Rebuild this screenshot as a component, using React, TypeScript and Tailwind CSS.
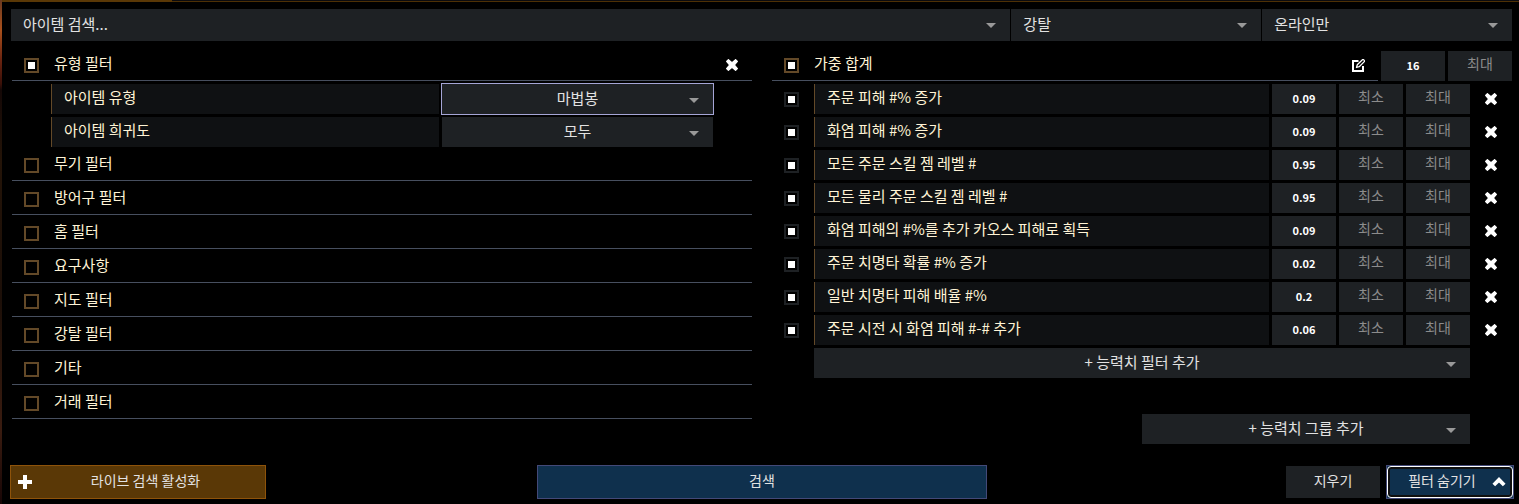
import React, { useState } from 'react';

interface StatFilter {
  id: number;
  label: string;
  weight: string;
}

const statFilters: StatFilter[] = [
  { id: 1, label: '주문 피해 #% 증가', weight: '0.09' },
  { id: 2, label: '화염 피해 #% 증가', weight: '0.09' },
  { id: 3, label: '모든 주문 스킬 젬 레벨 #', weight: '0.95' },
  { id: 4, label: '모든 물리 주문 스킬 젬 레벨 #', weight: '0.95' },
  { id: 5, label: '화염 피해의 #%를 추가 카오스 피해로 획득', weight: '0.09' },
  { id: 6, label: '주문 치명타 확률 #% 증가', weight: '0.02' },
  { id: 7, label: '일반 치명타 피해 배율 #%', weight: '0.2' },
  { id: 8, label: '주문 시전 시 화염 피해 #-# 추가', weight: '0.06' }
];

const closedGroups = [
  '무기 필터',
  '방어구 필터',
  '홈 필터',
  '요구사항',
  '지도 필터',
  '강탈 필터',
  '기타',
  '거래 필터'
];

const Caret = () => (
  <svg
    viewBox="0 0 10 5"
    className="pointer-events-none absolute right-3.5 top-3.5 h-[5px] w-[10px] text-[#999999]"
    aria-hidden="true"
  >
    <path d="M0 0h10L5 5z" fill="currentColor" />
  </svg>
);

const CloseIcon = () => (
  <svg viewBox="0 0 12 12" className="h-3 w-3" aria-hidden="true">
    <path
      d="M2.4.6L6 3.7 9.6.6l1.8 1.8L8.3 6l3.1 3.6-1.8 1.8L6 8.3l-3.6 3.1L.6 9.6 3.7 6 .6 2.4z"
      fill="currentColor"
      stroke="currentColor"
      strokeWidth="1.2"
      strokeLinejoin="round"
    />
  </svg>
);

const EditIcon = () => (
  <svg viewBox="0 0 13 13" className="h-[13px] w-[13px]" fill="none" aria-hidden="true">
    <path d="M6.5 2H1v10h10V7" stroke="currentColor" strokeWidth="2" />
    <path
      d="M4.5 8.5l.8-2.7L10.4.7a.8.8 0 0 1 1.2 0l.7.7a.8.8 0 0 1 0 1.2L7.2 7.7z"
      stroke="currentColor"
      strokeWidth="1.3"
      strokeLinejoin="round"
    />
  </svg>
);

interface DropdownProps {
  label: string;
  value: string;
  className: string;
  selectClassName: string;
}

const Dropdown: React.FC<DropdownProps> = ({ label, value, className, selectClassName }) => (
  <div className={`relative ${className}`}>
    <select
      aria-label={label}
      className={`block w-full appearance-none rounded-none bg-[#1e2124] pb-0.5 text-[15px] leading-5 text-[#e2e2e2] outline-none ${selectClassName}`}
    >
      <option>{value}</option>
    </select>
    <Caret />
  </div>
);

interface CheckProps {
  id: string;
  defaultChecked?: boolean;
  className: string;
}

const Check: React.FC<CheckProps> = ({ id, defaultChecked, className }) => (
  <input
    id={id}
    type="checkbox"
    defaultChecked={defaultChecked}
    className={`h-[15px] w-[15px] shrink-0 appearance-none border-2 bg-clip-content p-[2px] checked:bg-white ${className}`}
  />
);

const NumberBox = ({ label, value, placeholder }: { label: string; value?: string; placeholder?: string }) => (
  <input
    type="text"
    aria-label={label}
    defaultValue={value}
    placeholder={placeholder}
    className="h-[30px] w-16 shrink-0 bg-[#1e2124] pb-0.5 text-center text-[11px] font-bold text-white outline-none placeholder:text-sm placeholder:font-normal placeholder:text-[#8c8c8c] placeholder-shown:pb-1"
  />
);

const GroupHeader = ({ id, title, checked, children }: { id: string; title: string; checked?: boolean; children?: React.ReactNode }) => (
  <div className="flex h-[31px] min-w-0 flex-1 items-center border-b border-[#474f5f] pl-3">
    <Check id={id} defaultChecked={checked} className="border-[#634928]" />
    <label htmlFor={id} className="flex-1 pb-1 pl-[15px] text-[15px] leading-5 text-[#fff4d6]">
      {title}
    </label>
    {children}
  </div>
);

const PropertyRow = ({ label, value, focused }: { label: string; value: string; focused?: boolean }) => (
  <div className="flex gap-[3px] px-[39px]">
    <div className="h-[30px] flex-1 border-l border-[#634928] bg-[#0f1113] pl-3 pt-[3px] text-[15px] leading-5 text-[#fff4d6]">
      {label}
    </div>
    <Dropdown
      label={label}
      value={value}
      className="w-[271px]"
      selectClassName={
        focused
          ? 'h-[30px] text-center [text-align-last:center] ring-1 ring-[#a5a5d6]'
          : 'h-[30px] text-center [text-align-last:center]'
      }
    />
  </div>
);

const App: React.FC = () => {
  const [filters, setFilters] = useState<StatFilter[]>(statFilters);

  const removeFilter = (id: number) => {
    setFilters(filters.filter((filter) => filter.id !== id));
  };

  return (
    <div className="flex min-h-screen bg-black font-['Noto_Sans_CJK_KR','Liberation_Sans',sans-serif]">
      <div className="w-0.5 bg-[linear-gradient(to_bottom,#6b3a20_0,#a8501c_30px,#6a2410_60px,#3a1008_84px,#140806_90px,#241408_160px,#1c0f08_300px,#3a1c10_430px,#180606_504px)]" />

      <div className="min-w-0 flex-1">
        <div className="flex h-0.5">
          <div className="w-[170px] bg-[#5a3806]" />
          <div className="flex-1 border-b border-[#4d3005] bg-[#0b0b0f]" />
        </div>

        <main className="pb-[5px] pl-2 pr-[5px] pt-[7px]">
          <div className="flex gap-px pl-px pr-0.5">
            <div className="relative flex-4">
              <input
                type="text"
                aria-label="아이템 검색"
                placeholder="아이템 검색..."
                className="block h-8 w-full bg-[#1e2124] px-3 pb-1 text-[15px] text-[#e2e2e2] outline-none placeholder:text-[#e2e2e2]"
              />
              <Caret />
            </div>
            <Dropdown label="리그" value="강탈" className="flex-1" selectClassName="h-8 px-3" />
            <Dropdown label="상태" value="온라인만" className="flex-1" selectClassName="h-8 px-3" />
          </div>

          <div className="mt-[9px] flex items-start gap-5 px-0.5">
            <section className="flex min-w-0 flex-1 flex-col gap-[3px]">
              <div className="flex">
                <GroupHeader id="group-type" title="유형 필터" checked>
                  <button type="button" aria-label="유형 필터 닫기" className="flex w-10 justify-center text-white">
                    <CloseIcon />
                  </button>
                </GroupHeader>
              </div>
              <PropertyRow label="아이템 유형" value="마법봉" focused />
              <PropertyRow label="아이템 희귀도" value="모두" />
              {closedGroups.map((title, index) => (
                <div key={title} className="flex">
                  <GroupHeader id={`group-${index}`} title={title} />
                </div>
              ))}
            </section>

            <section className="flex min-w-0 flex-1 flex-col gap-[3px]">
              <div className="flex items-end gap-[3px]">
                <GroupHeader id="group-weight" title="가중 합계" checked>
                  <button type="button" aria-label="편집" className="mr-[13px] text-white">
                    <EditIcon />
                  </button>
                </GroupHeader>
                <div className="flex gap-[3px] self-center">
                  <NumberBox label="가중 합계 최소" value="16" />
                  <NumberBox label="가중 합계 최대" placeholder="최대" />
                </div>
              </div>

              {filters.map((filter) => (
                <div key={filter.id} className="flex items-center gap-[3px] pl-3 pr-[3px]">
                  <Check id={`stat-${filter.id}`} defaultChecked className="mr-3 border-[#1e2124]" />
                  <label
                    htmlFor={`stat-${filter.id}`}
                    className="h-[30px] flex-1 border-l border-[#634928] bg-[#0f1113] pl-3 pt-[3px] text-[15px] leading-5 text-[#fff4d6]"
                  >
                    {filter.label}
                  </label>
                  <NumberBox label={`${filter.label} 가중치`} value={filter.weight} />
                  <NumberBox label={`${filter.label} 최소`} placeholder="최소" />
                  <NumberBox label={`${filter.label} 최대`} placeholder="최대" />
                  <button
                    type="button"
                    aria-label={`${filter.label} 삭제`}
                    onClick={() => removeFilter(filter.id)}
                    className="flex w-9 justify-center text-white"
                  >
                    <CloseIcon />
                  </button>
                </div>
              ))}

              <Dropdown
                label="능력치 필터 추가"
                value="+ 능력치 필터 추가"
                className="mx-[42px]"
                selectClassName="h-[30px] text-center [text-align-last:center]"
              />
              <Dropdown
                label="능력치 그룹 추가"
                value="+ 능력치 그룹 추가"
                className="ml-auto mr-[42px] mt-[33px] w-[328px]"
                selectClassName="h-[30px] text-center [text-align-last:center]"
              />
            </section>
          </div>

          <div className="mt-[21px] grid grid-cols-[1fr_450px_1fr] items-center text-sm leading-5 text-[#e2e2e2]">
            <button
              type="button"
              className="flex h-[34px] w-64 items-center border border-[#8e530a] bg-[#5a3806] pl-[7px]"
            >
              <svg viewBox="0 0 14 14" className="h-3.5 w-3.5 text-white" aria-hidden="true">
                <path d="M5 0h4v5h5v4H9v5H5V9H0V5h5z" fill="currentColor" />
              </svg>
              <span className="flex-1 pb-1 pr-1.5">라이브 검색 활성화</span>
            </button>
            <button type="button" className="h-[34px] border border-[#434978] bg-[#0f304d] pb-1">
              검색
            </button>
            <div className="flex items-center justify-end gap-1.5">
              <button type="button" className="h-8 w-[94px] bg-[#1e2124] pb-1">
                지우기
              </button>
              <button type="button" className="h-[34px] w-32 border border-[#434978] bg-[#0f304d]">
                <span className="flex h-full items-center rounded-sm border border-white ring-2 ring-inset ring-[#101010]">
                  <span className="flex-1 pb-1 pl-1">필터 숨기기</span>
                  <svg viewBox="0 0 14 10" className="mr-1.5 h-2.5 w-3.5 text-white" fill="none" aria-hidden="true">
                    <path d="M1.8 8L7 2.8 12.2 8" stroke="currentColor" strokeWidth="3.8" />
                  </svg>
                </span>
              </button>
            </div>
          </div>
        </main>
      </div>
    </div>
  );
};

export default App;
